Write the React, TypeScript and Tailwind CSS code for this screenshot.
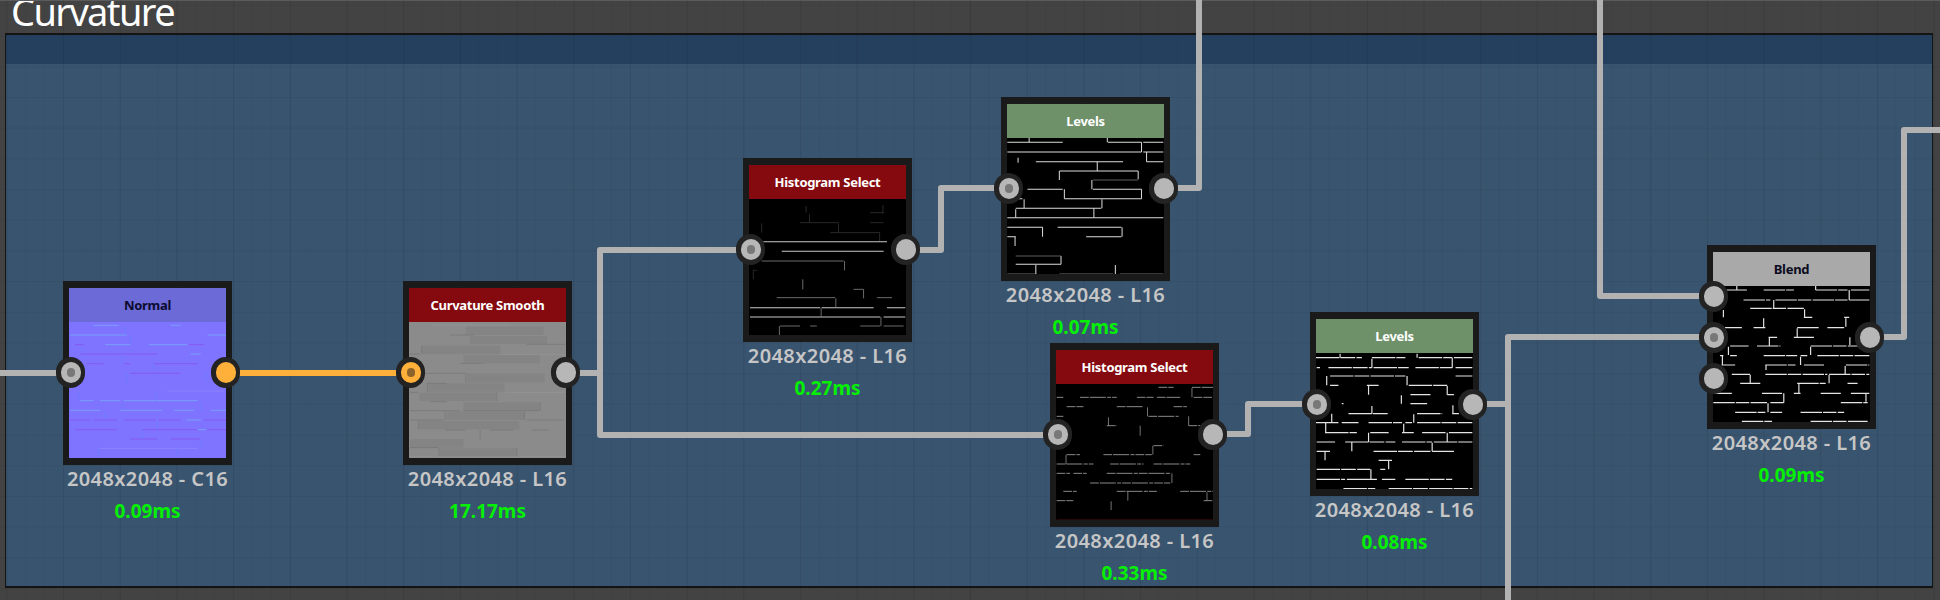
// Node graph frame: a "Curvature" comment frame with texture nodes wired together.
// Wires sit in one svg under the nodes. Each texture thumbnail is traced in the
// coordinates of a 3x crop, so the viewBox is just that crop's window.

type Layer = {
  color: string;
  width?: number;
  dash?: string;
  rows?: number[][]; // [y, x1, x2, x1, x2, ...]
  cols?: number[][]; // [x, y1, y2]
};

type Tex = {
  box: string;
  base: string;
  blocks?: number[][]; // x, y, w, h, darker bricks
  layers: Layer[];
};

type NodeData = {
  title: string;
  head: string;
  pos: string;
  info: string;
  time: string;
  tex: Tex;
  ports: { at: string; kind?: "dot" | "plain" | "hot" | "hotdot" }[];
};

const NORMAL: Tex = {
  box: "117 156 468 408",
  base: "#7f74ff",
  layers: [
    {
      color: "#76b4f2",
      width: 2,
      rows: [
        [166, 190, 265, 420, 450],
        [195, 120, 290, 530, 585],
        [224, 225, 300, 355, 470],
        [252, 480, 510],
        [392, 150, 190, 210, 270, 280, 500],
        [421, 120, 210, 270, 395, 430, 490, 540, 585],
        [450, 465, 510],
        [479, 500, 525],
      ],
    },
    {
      color: "#8a4be8",
      width: 2,
      rows: [
        [224, 135, 160, 475, 520],
        [252, 150, 380],
        [281, 170, 220, 280, 300, 370, 500],
        [310, 300, 450],
        [450, 120, 180, 190, 260, 280, 375, 385, 450, 520, 585],
        [479, 135, 260, 335, 500, 530, 585],
        [507, 300, 380, 420, 510],
      ],
    },
    {
      color: "#958cff",
      width: 2,
      rows: [
        [363, 410, 580],
        [535, 205, 500],
      ],
    },
    {
      color: "#6a7dff",
      width: 2.5,
      cols: [
        [285, 170, 195],
        [300, 195, 224],
        [155, 225, 250],
        [275, 252, 281],
        [370, 281, 300],
        [290, 310, 340],
        [525, 310, 335],
        [145, 365, 392],
        [375, 365, 392],
        [278, 397, 420],
        [510, 395, 420],
        [225, 425, 445],
        [380, 452, 478],
        [510, 505, 535],
        [335, 480, 507],
        [205, 535, 560],
        [440, 535, 560],
      ],
    },
  ],
};

const CURVATURE: Tex = {
  box: "27 21 470 408",
  base: "#8b8b8b",
  blocks: [
    [197, 35, 233, 25],
    [210, 63, 230, 24],
    [65, 92, 235, 25],
    [190, 120, 228, 25],
    [200, 175, 233, 27],
    [85, 205, 228, 25],
    [58, 233, 230, 25],
    [190, 262, 228, 24],
    [140, 290, 232, 25],
    [57, 318, 300, 25],
    [30, 372, 160, 26],
    [120, 400, 230, 25],
  ],
  layers: [
    {
      color: "#747474",
      width: 2,
      rows: [
        [60, 150, 220],
        [88, 380, 495],
        [117, 30, 60],
        [145, 180, 250],
        [175, 30, 195],
        [205, 80, 140],
        [232, 30, 55],
        [260, 90, 140],
        [287, 30, 180, 190, 420],
        [315, 30, 130, 380, 490],
        [345, 135, 195, 270, 340, 395, 445],
        [398, 30, 115],
      ],
      cols: [
        [197, 175, 202],
        [65, 92, 117],
        [290, 233, 258],
        [135, 290, 315],
        [373, 290, 315],
        [55, 318, 343],
        [117, 400, 425],
        [350, 400, 425],
        [82, 205, 230],
        [420, 262, 286],
        [240, 345, 372],
      ],
    },
    {
      color: "#9a9a9a",
      width: 1.5,
      rows: [
        [30, 100, 330],
        [118, 300, 495],
        [232, 315, 495],
        [425, 30, 495],
      ],
    },
  ],
};

const HIST_A: Tex = {
  box: "87 324 470 408",
  base: "#000000",
  layers: [
    {
      color: "#c8c8c8",
      width: 3,
      rows: [
        [452, 130, 500],
        [481, 185, 490],
        [650, 90, 300, 305, 460, 500, 555],
        [678, 90, 480, 490, 555],
      ],
    },
    {
      color: "#808080",
      width: 2.5,
      rows: [
        [510, 125, 370],
        [620, 170, 345, 470, 515],
        [705, 180, 240, 270, 290, 420, 480, 490, 550],
        [595, 400, 430],
      ],
      cols: [
        [373, 510, 538],
        [248, 565, 595],
        [430, 595, 622],
        [347, 622, 650],
        [303, 650, 678],
        [482, 678, 705],
        [178, 705, 732],
      ],
    },
    {
      color: "#3c3c3c",
      width: 2,
      rows: [
        [365, 450, 490],
        [395, 240, 355, 450, 490],
        [425, 330, 480],
        [538, 100, 110],
      ],
      cols: [
        [258, 345, 365],
        [268, 370, 393],
        [125, 397, 425],
        [355, 397, 425],
        [488, 342, 368],
        [478, 427, 450],
        [100, 538, 565],
      ],
    },
  ],
};

const LEVELS_A: Tex = {
  box: "864 141 468 408",
  base: "#000000",
  layers: [
    {
      color: "#dcdcdc",
      width: 3,
      rows: [
        [154, 865, 1030, 1165, 1265, 1270, 1330],
        [183, 865, 1265, 1270, 1330],
        [212, 950, 1210, 1280, 1330],
        [240, 1020, 1255],
        [295, 925, 1030, 1120, 1265],
        [323, 1035, 1265, 865, 910],
        [352, 890, 1145],
        [380, 865, 1330],
        [409, 865, 970, 1015, 1205],
        [437, 865, 890, 1100, 1205],
        [520, 890, 1025],
        [550, 865, 950, 1020, 1180, 1200, 1330],
      ],
      cols: [
        [1265, 154, 183],
        [1133, 212, 240],
        [1020, 240, 267],
        [1255, 240, 265],
        [1117, 267, 295],
        [1035, 295, 323],
        [1265, 295, 323],
        [1147, 325, 352],
        [915, 325, 352],
        [890, 355, 380],
        [1123, 352, 380],
        [970, 409, 437],
        [1207, 409, 437],
        [888, 437, 465],
        [1025, 495, 520],
        [950, 522, 550],
        [1187, 522, 550],
        [1280, 183, 212],
        [897, 200, 215],
        [930, 141, 154],
        [1163, 141, 154],
      ],
    },
    {
      color: "#707070",
      width: 2.5,
      rows: [
        [267, 1120, 1255],
        [495, 890, 1025],
      ],
    },
  ],
};

const HIST_B: Tex = {
  box: "48 250 470 408",
  base: "#000000",
  layers: [
    {
      color: "#a4a4a4",
      width: 2.5,
      dash: "26 3 48 4 12 3",
      rows: [
        [260, 355, 400, 455, 518],
        [290, 50, 70, 120, 230, 290, 340, 350, 420, 460, 515],
        [318, 80, 130, 230, 310, 400, 440],
        [347, 325, 415, 50, 70],
        [375, 445, 480, 200, 230],
        [435, 340, 370],
        [462, 80, 120, 190, 335, 460, 480],
        [490, 50, 160, 210, 310, 340, 450],
        [518, 50, 90, 100, 140, 200, 390],
        [547, 150, 390],
        [572, 70, 110, 230, 350, 420, 518],
        [600, 50, 100, 490, 518],
      ],
    },
    {
      color: "#8a8a8a",
      width: 2.5,
      cols: [
        [455, 262, 290],
        [322, 320, 347],
        [445, 347, 375],
        [205, 350, 375],
        [300, 375, 405],
        [338, 435, 462],
        [78, 462, 490],
        [395, 518, 547],
        [263, 572, 600],
        [213, 602, 628],
        [500, 575, 600],
      ],
    },
    { color: "#5a1518", width: 1.5, rows: [[656, 50, 518]] },
  ],
};

const LEVELS_B: Tex = {
  box: "33 23 469 408",
  base: "#000000",
  layers: [
    {
      color: "#e4e4e4",
      width: 3.5,
      dash: "70 3 44 4",
      rows: [
        [37, 33, 170, 200, 300, 340, 440, 445, 500],
        [67, 70, 200, 205, 310, 330, 440, 450, 500, 35, 45],
        [92, 75, 300, 450, 500],
        [120, 75, 100, 185, 220, 310, 425],
        [148, 425, 445, 315, 375],
        [175, 315, 365, 110, 115],
        [205, 130, 250, 335, 410, 440, 460],
        [232, 33, 100, 110, 160, 190, 290, 300, 320, 335, 500],
        [262, 60, 155, 195, 250, 290, 325, 350, 420, 430, 500],
        [290, 35, 90, 120, 270, 290, 380, 385, 500],
        [318, 35, 75, 205, 375, 380, 445],
        [345, 220, 260],
        [372, 35, 195, 225, 240],
        [402, 35, 120, 125, 195, 195, 215, 230, 270, 300, 440],
        [430, 115, 210, 250, 500],
      ],
      cols: [
        [105, 25, 37],
        [335, 25, 37],
        [440, 37, 67],
        [200, 40, 67],
        [305, 92, 120],
        [425, 122, 148],
        [65, 92, 120],
        [190, 120, 148],
        [288, 150, 175],
        [200, 182, 205],
        [80, 205, 230],
        [442, 180, 205],
        [325, 207, 232],
        [62, 232, 262],
        [295, 235, 262],
        [190, 262, 290],
        [425, 262, 290],
        [140, 290, 318],
        [380, 292, 318],
        [60, 320, 345],
        [250, 345, 372],
        [197, 372, 402],
      ],
    },
  ],
};

const BLEND: Tex = {
  box: "39 18 468 408",
  base: "#000000",
  layers: [
    {
      color: "#e4e4e4",
      width: 3.5,
      dash: "64 3 40 4",
      rows: [
        [30, 80, 140, 190, 280, 345, 440, 450, 505],
        [60, 130, 210, 225, 440, 445, 505],
        [85, 150, 310],
        [112, 310, 335, 430, 445],
        [143, 75, 125, 160, 195, 290, 355, 380, 430],
        [172, 205, 230, 280, 340],
        [198, 90, 145, 170, 240, 330, 500],
        [227, 60, 70, 90, 110, 190, 290, 300, 320, 350, 505],
        [255, 65, 105, 195, 285, 310, 370, 435, 505],
        [283, 95, 150, 195, 380, 385, 505],
        [310, 120, 180, 290, 375, 440, 470],
        [340, 40, 95, 185, 245, 280, 300, 360, 420, 450, 505],
        [368, 40, 200, 210, 250, 420, 500],
        [397, 105, 195, 210, 245, 300, 430],
        [424, 125, 215, 330, 500],
      ],
      cols: [
        [110, 15, 30],
        [345, 18, 30],
        [445, 30, 60],
        [220, 60, 85],
        [312, 88, 112],
        [435, 115, 140],
        [70, 90, 112],
        [190, 115, 143],
        [290, 145, 172],
        [207, 172, 198],
        [447, 172, 195],
        [85, 200, 225],
        [330, 200, 225],
        [67, 227, 255],
        [300, 230, 255],
        [197, 255, 270],
        [433, 258, 283],
        [385, 285, 310],
        [150, 285, 310],
        [495, 340, 365],
        [250, 340, 368],
        [203, 370, 397],
        [295, 312, 340],
      ],
    },
  ],
};

const NODES: NodeData[] = [
  {
    title: "Normal",
    head: "bg-[#6b6ad6] text-[#0b0b2e]",
    pos: "left-[63px] top-[281px]",
    info: "2048x2048 - C16",
    time: "0.09ms",
    tex: NORMAL,
    ports: [
      { at: "left-[-7px] top-[76px]", kind: "dot" },
      { at: "left-[148px] top-[76px]", kind: "hot" },
    ],
  },
  {
    title: "Curvature Smooth",
    head: "bg-[#850a0f] text-white",
    pos: "left-[403px] top-[281px]",
    info: "2048x2048 - L16",
    time: "17.17ms",
    tex: CURVATURE,
    ports: [
      { at: "left-[-7px] top-[76px]", kind: "hotdot" },
      { at: "left-[148px] top-[76px]" },
    ],
  },
  {
    title: "Histogram Select",
    head: "bg-[#850a0f] text-white",
    pos: "left-[743px] top-[158px]",
    info: "2048x2048 - L16",
    time: "0.27ms",
    tex: HIST_A,
    ports: [
      { at: "left-[-7px] top-[76px]", kind: "dot" },
      { at: "left-[148px] top-[76px]" },
    ],
  },
  {
    title: "Levels",
    head: "bg-[#6e9169] text-white",
    pos: "left-[1001px] top-[97px]",
    info: "2048x2048 - L16",
    time: "0.07ms",
    tex: LEVELS_A,
    ports: [
      { at: "left-[-7px] top-[76px]", kind: "dot" },
      { at: "left-[148px] top-[76px]" },
    ],
  },
  {
    title: "Histogram Select",
    head: "bg-[#850a0f] text-white",
    pos: "left-[1050px] top-[343px]",
    info: "2048x2048 - L16",
    time: "0.33ms",
    tex: HIST_B,
    ports: [
      { at: "left-[-7px] top-[76px]", kind: "dot" },
      { at: "left-[148px] top-[76px]" },
    ],
  },
  {
    title: "Levels",
    head: "bg-[#6e9169] text-white",
    pos: "left-[1310px] top-[312px]",
    info: "2048x2048 - L16",
    time: "0.08ms",
    tex: LEVELS_B,
    ports: [
      { at: "left-[-8px] top-[77px]", kind: "dot" },
      { at: "left-[148px] top-[77px]" },
    ],
  },
  {
    title: "Blend",
    head: "bg-[#a9a9a9] text-[#0b0b1e]",
    pos: "left-[1707px] top-[245px]",
    info: "2048x2048 - L16",
    time: "0.09ms",
    tex: BLEND,
    ports: [
      { at: "left-[-8px] top-[36px]" },
      { at: "left-[-8px] top-[77px]", kind: "dot" },
      { at: "left-[-8px] top-[118px]" },
      { at: "left-[148px] top-[77px]" },
    ],
  },
];

const WIRES = [
  "M0 373H70",
  "M565 373H600M750 250H600V435H1057",
  "M905 250H941V188H1008",
  "M1164 188H1199V0",
  "M1212 434H1248V404H1316",
  "M1472 404H1508",
  "M1508 600V337H1713",
  "M1600 0V296H1713",
  "M1869 337H1904V130H1940",
];

function Texture({ tex }: { tex: Tex }) {
  return (
    <svg
      viewBox={tex.box}
      preserveAspectRatio="none"
      className="block h-[136px] w-full blur-[0.3px]"
      style={{ background: tex.base }}
    >
      {tex.blocks?.map((b, i) => (
        <rect key={i} x={b[0]} y={b[1]} width={b[2]} height={b[3]} fill="#848484" />
      ))}
      {tex.layers.map((l, i) => {
        let d = "";
        for (const r of l.rows ?? []) {
          for (let k = 1; k < r.length; k += 2) d += `M${r[k]} ${r[0]}H${r[k + 1]}`;
        }
        let v = "";
        for (const c of l.cols ?? []) v += `M${c[0]} ${c[1]}V${c[2]}`;
        return (
          <g key={i} stroke={l.color} strokeWidth={l.width ?? 2} fill="none">
            <path d={d} strokeDasharray={l.dash} />
            <path d={v} />
          </g>
        );
      })}
    </svg>
  );
}

function Port({ at, kind = "plain" }: { at: string; kind?: "dot" | "plain" | "hot" | "hotdot" }) {
  const hot = kind === "hot" || kind === "hotdot";
  const dot = kind === "dot" || kind === "hotdot";
  return (
    <div
      className={`absolute flex h-[31px] w-[29px] items-center justify-center rounded-full bg-[#232323] ${at}`}
    >
      <div
        className={`flex h-[21px] w-[20px] items-center justify-center rounded-full ${
          hot ? "bg-[#ffb03b]" : "bg-[#b7b7b7]"
        }`}
      >
        {dot && (
          <div
            className={`h-[9px] w-[8px] rounded-full ${hot ? "bg-[#8d632c]" : "bg-[#787878]"}`}
          />
        )}
      </div>
    </div>
  );
}

function GraphNode({ node }: { node: NodeData }) {
  return (
    <div className={`absolute w-[169px] ${node.pos}`}>
      <div className="relative h-[184px]">
        <div className="h-full border-x-[6px] border-y-[7px] border-[#1a1a1a] bg-black">
          <div
            className={`flex h-[34px] items-center justify-center pt-[2px] text-[13px] font-bold tracking-[-0.3px] ${node.head}`}
          >
            {node.title}
          </div>
          <Texture tex={node.tex} />
        </div>
        {node.ports.map((p, i) => (
          <Port key={i} at={p.at} kind={p.kind} />
        ))}
      </div>
      <div className="whitespace-nowrap text-center text-[20px] leading-[28px] font-semibold tracking-[0.4px] text-[#c6c6c6]">
        {node.info}
      </div>
      <div className="mt-[4px] text-center text-[19px] leading-[28px] font-bold text-[#05f005]">
        {node.time}
      </div>
    </div>
  );
}

export default function App() {
  return (
    <div className="relative h-[600px] w-[1940px] overflow-hidden bg-[#434343] font-['Noto_Sans',sans-serif]">
      {/* title row, the top of the caps is cut by the window */}
      <div className="flex h-[33px] items-end overflow-hidden border-t border-[#5c5c5c] pl-[11px]">
        <span className="text-[38px] leading-[44px] tracking-[-1.6px] text-white">Curvature</span>
      </div>

      <div className="ml-[5px] flex h-[555px] w-[1928px] flex-col border-x border-t-2 border-b-2 border-[#141414]">
        <div className="h-[29px] bg-[#25405f]" />
        <div className="flex-1 bg-[#39546f]" />
      </div>

      {/* background grid lies over the frame fill and under the wires */}
      <div className="pointer-events-none absolute inset-0 bg-[linear-gradient(to_right,rgba(0,0,0,0.07)_1px,transparent_1px),linear-gradient(to_right,rgba(0,0,0,0.03)_1px,transparent_1px),linear-gradient(to_bottom,rgba(0,0,0,0.05)_1px,transparent_1px)] bg-[size:56.7px_100%,18.9px_100%,100%_30.7px] bg-[position:6.5px_0,6.3px_0,0_4.9px]" />

      <svg className="absolute inset-0" width={1940} height={600} fill="none">
        {WIRES.map((d) => (
          <path key={d} d={d} stroke="#b2b2b2" strokeWidth={6} strokeLinejoin="round" />
        ))}
        <path d="M226 373H410" stroke="#ffb03b" strokeWidth={6} />
      </svg>

      {NODES.map((n) => (
        <GraphNode key={n.pos} node={n} />
      ))}
    </div>
  );
}
